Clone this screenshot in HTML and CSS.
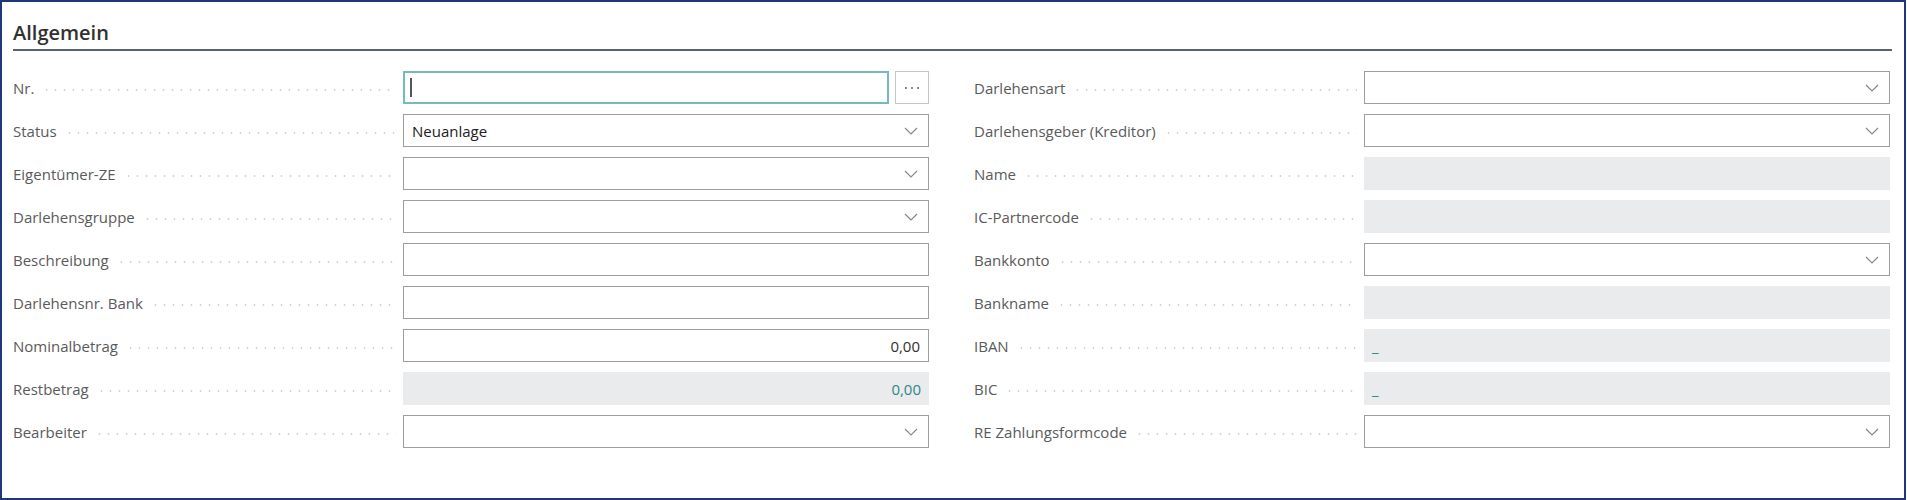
FILE: index.html
```html
<!doctype html>
<html>
<head>
<meta charset="utf-8">
<title>Darlehen - Allgemein</title>
<link rel="stylesheet" href="styles.css">
</head>
<body>
<div class="frame">
  <h2 class="title">Allgemein</h2>

  <div class="fields">
    <div class="col">
      <div class="field">
        <span class="label">Nr.<i class="lead"></i></span>
        <div class="lookup">
          <div class="box focus"><span class="caret"></span></div>
          <button class="more"><svg width="16" height="4" viewBox="0 0 16 4"><circle cx="2" cy="2" r="1"/><circle cx="8" cy="2" r="1"/><circle cx="14" cy="2" r="1"/></svg></button>
        </div>
      </div>
      <div class="field">
        <span class="label">Status<i class="lead"></i></span>
        <div class="box select">Neuanlage<svg class="chev" width="14" height="8" viewBox="0 0 14 8"><polyline points="1,1 7,7 13,1"/></svg></div>
      </div>
      <div class="field">
        <span class="label">Eigentümer-ZE<i class="lead"></i></span>
        <div class="box select"><svg class="chev" width="14" height="8" viewBox="0 0 14 8"><polyline points="1,1 7,7 13,1"/></svg></div>
      </div>
      <div class="field">
        <span class="label">Darlehensgruppe<i class="lead"></i></span>
        <div class="box select"><svg class="chev" width="14" height="8" viewBox="0 0 14 8"><polyline points="1,1 7,7 13,1"/></svg></div>
      </div>
      <div class="field">
        <span class="label">Beschreibung<i class="lead"></i></span>
        <div class="box"></div>
      </div>
      <div class="field">
        <span class="label">Darlehensnr. Bank<i class="lead"></i></span>
        <div class="box"></div>
      </div>
      <div class="field">
        <span class="label">Nominalbetrag<i class="lead"></i></span>
        <div class="box num">0,00</div>
      </div>
      <div class="field">
        <span class="label">Restbetrag<i class="lead"></i></span>
        <div class="box ro num">0,00</div>
      </div>
      <div class="field">
        <span class="label">Bearbeiter<i class="lead"></i></span>
        <div class="box select"><svg class="chev" width="14" height="8" viewBox="0 0 14 8"><polyline points="1,1 7,7 13,1"/></svg></div>
      </div>
    </div>

    <div class="col">
      <div class="field">
        <span class="label">Darlehensart<i class="lead"></i></span>
        <div class="box select"><svg class="chev" width="14" height="8" viewBox="0 0 14 8"><polyline points="1,1 7,7 13,1"/></svg></div>
      </div>
      <div class="field">
        <span class="label">Darlehensgeber (Kreditor)<i class="lead"></i></span>
        <div class="box select"><svg class="chev" width="14" height="8" viewBox="0 0 14 8"><polyline points="1,1 7,7 13,1"/></svg></div>
      </div>
      <div class="field">
        <span class="label">Name<i class="lead"></i></span>
        <div class="box ro"></div>
      </div>
      <div class="field">
        <span class="label">IC-Partnercode<i class="lead"></i></span>
        <div class="box ro"></div>
      </div>
      <div class="field">
        <span class="label">Bankkonto<i class="lead"></i></span>
        <div class="box select"><svg class="chev" width="14" height="8" viewBox="0 0 14 8"><polyline points="1,1 7,7 13,1"/></svg></div>
      </div>
      <div class="field">
        <span class="label">Bankname<i class="lead"></i></span>
        <div class="box ro"></div>
      </div>
      <div class="field">
        <span class="label">IBAN<i class="lead"></i></span>
        <div class="box ro">_</div>
      </div>
      <div class="field">
        <span class="label">BIC<i class="lead"></i></span>
        <div class="box ro">_</div>
      </div>
      <div class="field">
        <span class="label">RE Zahlungsformcode<i class="lead"></i></span>
        <div class="box select"><svg class="chev" width="14" height="8" viewBox="0 0 14 8"><polyline points="1,1 7,7 13,1"/></svg></div>
      </div>
    </div>
  </div>
</div>
</body>
</html>
```

FILE: styles.css
```css
body{ margin:0; background:#fff; font-family:"Open Sans","Noto Sans",sans-serif; }

.frame{
	width:1906px;
	height:500px;
	box-sizing:border-box;
	border:2px solid #1e3777;
	padding:18px 12px 0 11px;
}

.title{
	margin:0;
	font-size:20px;
	line-height:26px;
	font-weight:600;
	color:#323130;
	padding-bottom:3px;
	border-bottom:2px solid #5a6272;
}

.fields{
	display:grid;
	grid-template-columns:1fr 1fr;
	column-gap:45px;
	margin:20px 2px 0 0;
}
.col{ display:flex; flex-direction:column; gap:10px; }

.field{
	display:grid;
	grid-template-columns:390px 1fr;
	height:33px;
}
.label{
	display:flex;
	align-items:center;
	font-size:15px;
	color:#5a5a5a;
	white-space:nowrap;
}
.lead{
	flex:1;
	height:4px;
	margin:5px 7px 0 8px;
	background-image:radial-gradient(circle, #d2d2d2 0.8px, transparent 1.2px);
	background-size:9px 4px;
	background-repeat:repeat-x;
}

.box{
	box-sizing:border-box;
	height:33px;
	border:1px solid #9e9e9e;
	background:#fff;
	display:flex;
	align-items:center;
	padding:0 8px;
	font-size:15px;
	color:#212121;
}
.box.focus{ border:2px solid #74bcb8; padding-left:5px; }
.box.select{ justify-content:space-between; }
.box.num{ justify-content:flex-end; color:#323130; }
.box.ro{ border:none; background:#eaebec; color:#2f878a; }

.chev{ fill:none; stroke:#8a8886; stroke-width:1.2; margin-right:2px; margin-left:auto; }

.caret{ display:block; width:2px; height:19px; background:#555; }

.lookup{ display:flex; gap:6px; }
.lookup .box{ flex:1; }
.more{
	width:34px;
	height:33px;
	padding:0;
	border:1px solid #c8c6c4;
	background:#fff;
	display:flex;
	align-items:center;
	justify-content:center;
}
.more svg{ fill:#605e5c; }
```
